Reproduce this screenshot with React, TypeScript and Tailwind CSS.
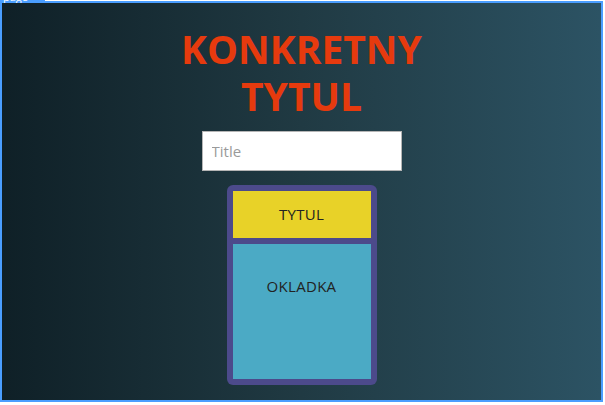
export default function App() {
  return (
    <div className="relative h-[405px] w-[605px] bg-white pt-px" style={{ fontFamily: '"Open Sans", "Noto Sans", sans-serif' }}>
      {/* devtools-ish label tab */}
      <div className="absolute left-0 top-0 z-10 h-[3px] w-[45px] overflow-hidden bg-[#4a9eff]">
        <span className="absolute -top-[9px] left-[3px] text-[11px] leading-[12px] text-white">page</span>
      </div>

      <div className="flex h-[401px] w-[603px] flex-col items-center border-2 border-[#4a9eff] bg-gradient-to-r from-[#0f2027] via-[#203a43] to-[#2c5364]">
        <h1 className="mt-[22px] text-center text-[39px] font-bold leading-[47px] text-[#e63a0e]">
          KONKRETNY
          <br />
          TYTUL
        </h1>

        <input
          type="text"
          placeholder="Title"
          className="mt-[12px] h-[40px] w-[200px] border border-[#b5b5b5] bg-white px-[9px] text-[15px] text-gray-800 outline-none placeholder:text-[#9a9a9a]"
        />

        <div className="mt-[14px] flex h-[200px] w-[150px] flex-col gap-[6px] rounded-[6px] bg-[#4c4a8b] p-[6px]">
          <div className="flex h-[47px] items-center justify-center bg-[#e8d228] text-[15px] tracking-[0.3px] text-[#222]">
            TYTUL
          </div>
          <div className="flex-1 bg-[#4baac5] pt-[31px] text-center text-[15px] tracking-[0.3px] text-[#222]">
            OKLADKA
          </div>
        </div>
      </div>
    </div>
  )
}
